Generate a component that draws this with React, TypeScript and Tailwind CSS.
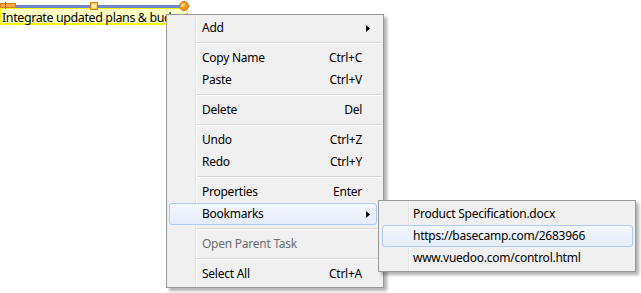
import { ReactNode } from "react";

type Item =
  | { kind: "sep" }
  | {
      kind: "item";
      label: string;
      shortcut?: string;
      submenu?: boolean;
      disabled?: boolean;
      active?: boolean;
    };

const mainItems: Item[] = [
  { kind: "item", label: "Add", submenu: true },
  { kind: "sep" },
  { kind: "item", label: "Copy Name", shortcut: "Ctrl+C" },
  { kind: "item", label: "Paste", shortcut: "Ctrl+V" },
  { kind: "sep" },
  { kind: "item", label: "Delete", shortcut: "Del" },
  { kind: "sep" },
  { kind: "item", label: "Undo", shortcut: "Ctrl+Z" },
  { kind: "item", label: "Redo", shortcut: "Ctrl+Y" },
  { kind: "sep" },
  { kind: "item", label: "Properties", shortcut: "Enter" },
  { kind: "item", label: "Bookmarks", submenu: true, active: true },
  { kind: "sep" },
  { kind: "item", label: "Open Parent Task", disabled: true },
  { kind: "sep" },
  { kind: "item", label: "Select All", shortcut: "Ctrl+A" },
];

const bookmarks = [
  { label: "Product Specification.docx" },
  { label: "https://basecamp.com/2683966", active: true },
  { label: "www.vuedoo.com/control.html" },
];

function Arrow() {
  return (
    <svg width="4" height="7" viewBox="0 0 4 7" className="block">
      <path d="M0 0 L4 3.5 L0 7 Z" fill="#000" />
    </svg>
  );
}

function Highlight({ active, children, className }: { active?: boolean; children: ReactNode; className: string }) {
  return (
    <div
      className={
        active
          ? `${className} rounded-[3px] border border-[#aecbf0] bg-gradient-to-b from-[#f3f7fd] to-[#e5edfa]`
          : `${className} border border-transparent`
      }
    >
      {children}
    </div>
  );
}

function MainMenu() {
  return (
    <div className="absolute left-[166px] top-[14px] w-[218px] border border-[#979797] bg-[#f0f0f0] pt-[2px] pb-[2px] shadow-[3px_3px_3px_rgba(0,0,0,0.3)]">
      <div className="pointer-events-none absolute top-0 bottom-0 left-[28px] flex">
        <div className="h-full w-px bg-[#e2e3e3]" />
        <div className="h-full w-px bg-white" />
      </div>
      {mainItems.map((it, i) =>
        it.kind === "sep" ? (
          <div key={i} className="relative ml-[30px] mr-px flex h-[8px] flex-col justify-center">
            <div className="h-px bg-[#d7d7d7]" />
            <div className="h-px bg-white" />
          </div>
        ) : (
          <Highlight
            key={i}
            active={it.active}
            className="relative ml-[2px] mr-[6px] flex h-[22px] items-center pl-[32px] pr-[14px]"
          >
            <span className={it.disabled ? "flex-1 text-[#6d6d6d]" : "flex-1 text-black"}>{it.label}</span>
            {it.shortcut && <span className="text-black">{it.shortcut}</span>}
            {it.submenu && (
              <span className="mr-[-8px]">
                <Arrow />
              </span>
            )}
          </Highlight>
        )
      )}
    </div>
  );
}

function SubMenu() {
  return (
    <div className="absolute left-[378px] top-[200px] w-[258px] border border-[#979797] bg-[#f0f0f0] pt-[2px] pb-[2px] shadow-[3px_3px_3px_rgba(0,0,0,0.3)]">
      <div className="pointer-events-none absolute top-0 bottom-0 left-[29px] flex">
        <div className="h-full w-px bg-[#e2e3e3]" />
        <div className="h-full w-px bg-white" />
      </div>
      {bookmarks.map((b, i) => (
        <Highlight
          key={i}
          active={b.active}
          className="relative ml-[3px] mr-[2px] flex h-[22px] items-center pl-[30px]"
        >
          <span className="text-black">{b.label}</span>
        </Highlight>
      ))}
    </div>
  );
}

function TaskBar() {
  return (
    <div className="relative h-[26px] w-[190px]">
      <div className="absolute left-0 top-[5px] h-[3px] w-[184px] bg-[#6e86cb]" />
      <div className="absolute left-0 top-[8px] h-[17px] w-[188px] border-l border-r border-b-2 border-t border-[#f6f600] bg-[#ffffc4]">
        <div className="whitespace-nowrap pl-px pt-px text-[12.5px] leading-[15px] tracking-[-0.4px] text-black">
          Integrate updated plans &amp; budget
        </div>
      </div>
      <svg className="absolute left-0 top-0" width="190" height="12" viewBox="0 0 190 12">
        <rect x="0.5" y="3.5" width="15" height="4" fill="#f7a844" stroke="#d77c18" />
        <line x1="5.5" y1="2" x2="5.5" y2="9" stroke="#b8621a" />
        <rect x="90.5" y="2.5" width="7" height="7" fill="#ffcf5a" stroke="#e07a10" />
        <rect x="92" y="4" width="4" height="4" fill="#ffe9a0" />
        <circle cx="184" cy="6" r="4.5" fill="#f39a1e" stroke="#d8720c" />
        <circle cx="183" cy="5" r="2" fill="#ffd27a" />
      </svg>
    </div>
  );
}

export default function App() {
  return (
    <div
      className="relative h-[293px] w-[641px] overflow-hidden bg-white text-[12px] tracking-[-0.25px]"
      style={{ fontFamily: '"Noto Sans", "Open Sans", sans-serif' }}
    >
      <TaskBar />
      <MainMenu />
      <SubMenu />
    </div>
  );
}
